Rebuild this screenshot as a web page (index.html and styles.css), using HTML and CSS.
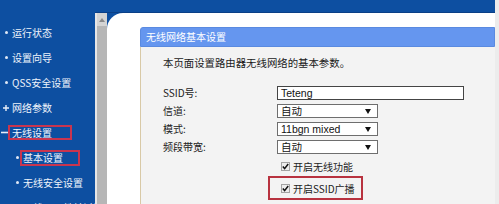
FILE: index.html
```html
<!DOCTYPE html>
<html lang="zh-CN">
<head>
<meta charset="utf-8">
<title>无线网络基本设置</title>
<link rel="stylesheet" href="styles.css">
</head>
<body>
<div class="page">
  <nav class="sidebar">
    <ul class="menu">
      <li class="item"><span class="marker marker-dot"></span>运行状态</li>
      <li class="item"><span class="marker marker-dot"></span>设置向导</li>
      <li class="item"><span class="marker marker-dot"></span>QSS安全设置</li>
      <li class="item"><span class="marker"><svg width="6" height="6" viewBox="0 0 6 6"><path d="M3 0V6M0 3H6" stroke="#e8eef8" stroke-width="1.4"/></svg></span>网络参数</li>
      <li class="item"><span class="marker marker-minus"><svg width="7" height="3" viewBox="0 0 7 3"><path d="M0 1.5H7" stroke="#e8eef8" stroke-width="1.6"/></svg></span><span class="mark mark-main">无线设置</span></li>
      <li class="item sub"><span class="marker marker-dot"></span><span class="mark mark-sub">基本设置</span></li>
      <li class="item sub"><span class="marker marker-dot"></span>无线安全设置</li>
      <li class="item sub"><span class="marker marker-dot"></span>无线MAC地址过滤</li>
    </ul>
  </nav>
  <div class="right">
    <div class="topband"></div>
    <div class="lower">
      <div class="scrollbar">
        <div class="sb-up"><svg width="6" height="4" viewBox="0 0 6 4"><path d="M0 4L3 0L6 4Z" fill="#8a8a8a"/></svg></div>
      </div>
      <main class="content">
        <section class="panel">
          <div class="panel-head">无线网络基本设置</div>
          <div class="panel-body">
            <p class="intro">本页面设置路由器无线网络的基本参数。</p>
            <div class="form">
              <span class="label">SSID号:</span>
              <div class="input">Teteng</div>
              <span class="label">信道:</span>
              <div class="select">自动<svg class="arrow" width="6" height="5" viewBox="0 0 6 5"><path d="M0 0H6L3 5Z" fill="#111"/></svg></div>
              <span class="label">模式:</span>
              <div class="select">11bgn mixed<svg class="arrow" width="6" height="5" viewBox="0 0 6 5"><path d="M0 0H6L3 5Z" fill="#111"/></svg></div>
              <span class="label">频段带宽:</span>
              <div class="select">自动<svg class="arrow" width="6" height="5" viewBox="0 0 6 5"><path d="M0 0H6L3 5Z" fill="#111"/></svg></div>
            </div>
            <div class="checks">
              <div class="check-row"><span class="cb"><svg width="7" height="7" viewBox="0 0 7 7"><path d="M0.8 3.6L2.6 5.6L6.2 1" stroke="#111" stroke-width="1.5" fill="none"/></svg></span>开启无线功能</div>
              <div class="check-row mark-ssid"><span class="cb"><svg width="7" height="7" viewBox="0 0 7 7"><path d="M0.8 3.6L2.6 5.6L6.2 1" stroke="#111" stroke-width="1.5" fill="none"/></svg></span>开启SSID广播</div>
              <div class="check-row"><span class="cb"></span>开启WDS</div>
            </div>
          </div>
        </section>
      </main>
    </div>
  </div>
  <div class="strip"></div>
</div>
</body>
</html>
```

FILE: styles.css
```css
* { box-sizing: border-box; }
html, body { margin: 0; padding: 0; }
body {
  width: 499px;
  height: 204px;
  overflow: hidden;
  background: #ececec;
  font-family: "Noto Sans CJK SC", "Liberation Sans", sans-serif;
  font-size: 10px;
  color: #222;
}
.page { display: flex; height: 204px; }

/* sidebar */
.sidebar {
  width: 95px;
  flex: none;
  background: #0d4fa1;
  color: #eef3fb;
  padding-top: 20px;
}
.menu { list-style: none; margin: 0; padding: 0; }
.item {
  display: flex;
  align-items: center;
  height: 25px;
  line-height: 12px;
  white-space: nowrap;
}
.item.sub { padding-left: 11px; }
.marker {
  width: 12px;
  flex: none;
  display: flex;
  justify-content: center;
  align-items: center;
}
.marker-dot::after {
  content: "";
  width: 3px;
  height: 3px;
  border-radius: 50%;
  background: #dfe8f6;
}
.marker-minus { width: 8px; justify-content: flex-start; padding-left: 1px; }
.mark { display: inline-block; border: 2px solid #c8354f; }
.mark-main { padding: 0 18px 0 2px; height: 15px; line-height: 11px; }
.mark-sub { margin-left: -3px; padding: 0 15px 0 1px; height: 16px; line-height: 12px; }

/* right column */
.right {
  width: 400px;
  flex: none;
  display: flex;
  flex-direction: column;
  background: #0d4fa1;
}
.topband { height: 13px; flex: none; border-bottom: 1px solid #0a3f86; }
.lower { flex: 1; display: flex; }
.scrollbar {
  width: 12px;
  flex: none;
  border-left: 2px solid #e6e6e6;
  background: #b6b6b6;
}
.sb-up {
  height: 13px;
  background: #d4d4d4;
  display: flex;
  align-items: center;
  justify-content: center;
}
.content {
  flex: 1;
  background: #fff;
  border-top-left-radius: 16px;
  padding: 14px 0 0 33px;
}
.strip { flex: 1; background: #ececec; }

/* panel */
.panel-head {
  height: 20px;
  background: #6596ef;
  border: 1px solid #5a8ae0;
  border-top-left-radius: 3px;
  color: #fff;
  line-height: 18px;
  padding-left: 5px;
  font-size: 10px;
}
.panel-body {
  background: #f3f3f3;
  border-left: 1px solid #d8c9a6;
  padding-left: 22px;
  height: 200px;
}
.intro {
  margin: 0;
  padding-top: 9px;
  line-height: 14px;
  font-size: 10.4px;
  color: #1a1a1a;
}
.form {
  margin-top: 16px;
  display: grid;
  grid-template-columns: 114px auto;
  grid-auto-rows: 14px;
  row-gap: 4px;
  align-items: center;
}
.label { line-height: 14px; color: #222; }
.input {
  width: 187px;
  height: 14px;
  border: 1px solid #444;
  background: #fff;
  padding-left: 3px;
  font-family: "Liberation Sans", sans-serif;
  font-size: 10.5px;
  line-height: 12px;
  color: #111;
}
.select {
  width: 101px;
  height: 14px;
  border: 1px solid #6e6e6e;
  background: #fff;
  padding-left: 3px;
  font-family: "Liberation Sans", "Noto Sans CJK SC", sans-serif;
  font-size: 10.5px;
  line-height: 12px;
  color: #111;
  display: flex;
  align-items: center;
  justify-content: space-between;
  padding-right: 6px;
}
.checks { margin-top: 2px; }
.check-row {
  display: flex;
  align-items: center;
  height: 20px;
  padding-left: 118px;
  white-space: nowrap;
}
.cb {
  width: 9px;
  height: 9px;
  border: 1px solid #a3a3a3;
  background: #ededed;
  display: flex;
  align-items: center;
  justify-content: center;
  margin-right: 3px;
  flex: none;
}
.mark-ssid {
  margin-left: 105px;
  padding-left: 11px;
  width: 95px;
  height: 24px;
  border: 2px solid #b8323f;
}
```
